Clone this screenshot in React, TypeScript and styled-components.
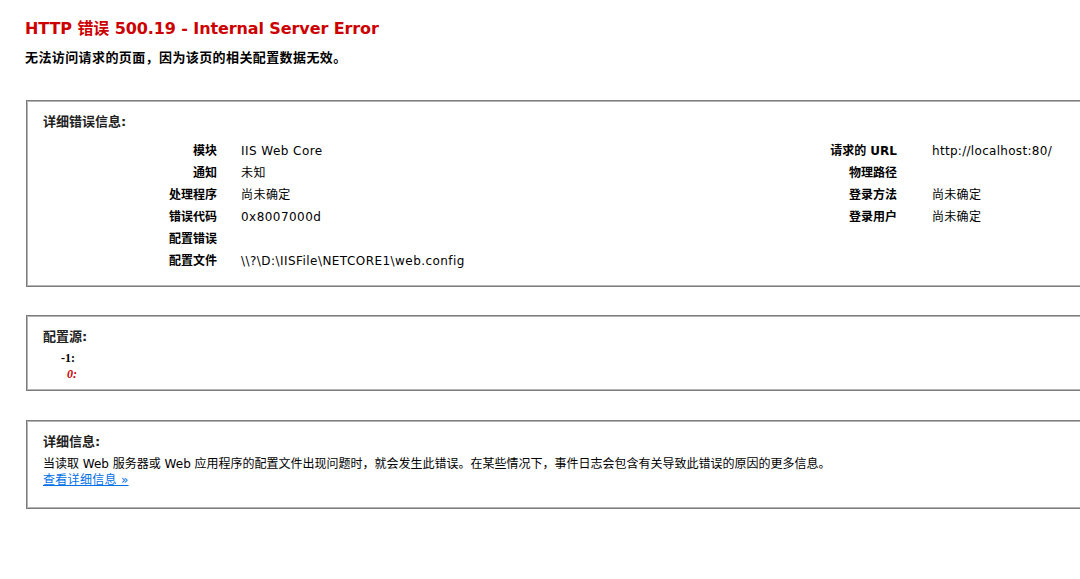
import React from 'react';
import styled, { createGlobalStyle } from 'styled-components';

const GlobalStyle = createGlobalStyle`
    html, body {
        margin: 0;
        padding: 0;
        background: #ffffff;
        overflow: hidden;
    }
    body {
        font-family: "DejaVu Sans", Verdana, "Noto Sans CJK SC", sans-serif;
        font-size: 12px;
        color: #000000;
    }
`;

const Page = styled.div`
    width: 1080px;
    height: 579px;
    overflow: hidden;
    padding: 18px 0 0 25px;
    box-sizing: border-box;
`;

const Title = styled.h2`
    margin: 0;
    font-size: 16px;
    line-height: 22px;
    font-weight: bold;
    color: #cc0000;
    letter-spacing: -0.1px;
`;

const SubTitle = styled.h3`
    margin: 9px 0 0 0;
    font-size: 13px;
    line-height: 18px;
    font-weight: bold;
    color: #000000;
    letter-spacing: 0.4px;
`;

const Box = styled.section<{ $top: number; $pad: number }>`
    margin: ${p => p.$top}px 0 0 1px;
    width: 1100px;
    box-sizing: border-box;
    border: 1px solid #7c7c7c;
    box-shadow: inset 0 0 0 1px #b4b4b4;
    padding: 12px 17px ${p => p.$pad}px 16px;
`;

const Legend = styled.div`
    font-weight: bold;
    font-size: 13px;
    color: #222222;
    line-height: 17px;
`;

const Details = styled.div`
    display: flex;
    margin-top: 10px;
`;

const Table = styled.div<{ $label: number; $gap: number; $width: number }>`
    display: grid;
    grid-template-columns: ${p => p.$label}px 1fr;
    column-gap: ${p => p.$gap}px;
    width: ${p => p.$width}px;
    align-content: start;
`;

const Label = styled.div`
    text-align: right;
    font-weight: bold;
    line-height: 16px;
    padding: 3px 0;
    white-space: nowrap;
`;

const Value = styled.div<{ $spacing: number }>`
    line-height: 16px;
    padding: 3px 0;
    white-space: nowrap;
    letter-spacing: ${p => p.$spacing}px;
`;

const SourceList = styled.div`
    margin-top: 5px;
    font-family: "Liberation Serif", "Times New Roman", serif;
    font-size: 12px;
    line-height: 16px;
`;

const SourceLine = styled.div<{ $indent: number; $hl?: boolean }>`
    padding-left: ${p => p.$indent}px;
    font-weight: bold;
    color: ${p => (p.$hl ? '#cc0000' : '#000000')};
    font-style: ${p => (p.$hl ? 'italic' : 'normal')};
`;

const Para = styled.p`
    margin: 6px 0 0 0;
    line-height: 16px;
`;

const MoreLink = styled.a`
    color: #0070e8;
    text-decoration: underline;
    line-height: 16px;
    display: inline-block;
    letter-spacing: 0.3px;
`;

const leftRows = [
    ['模块', 'IIS Web Core'],
    ['通知', '未知'],
    ['处理程序', '尚未确定'],
    ['错误代码', '0x8007000d'],
    ['配置错误', ''],
    ['配置文件', '\\\\?\\D:\\IISFile\\NETCORE1\\web.config'],
];

const rightRows = [
    ['请求的 URL', 'http://localhost:80/'],
    ['物理路径', ''],
    ['登录方法', '尚未确定'],
    ['登录用户', '尚未确定'],
];

const App = () => {
    return (
        <Page>
            <GlobalStyle />
            <Title>HTTP 错误 500.19 - Internal Server Error</Title>
            <SubTitle>无法访问请求的页面，因为该页的相关配置数据无效。</SubTitle>

            <Box $top={33} $pad={14}>
                <Legend>详细错误信息:</Legend>
                <Details>
                    <Table $label={174} $gap={24} $width={660}>
                        {leftRows.map((row, i) => (
                            <React.Fragment key={i}>
                                <Label>{row[0]}</Label>
                                <Value $spacing={0.45}>{row[1]}</Value>
                            </React.Fragment>
                        ))}
                    </Table>
                    <Table $label={194} $gap={35} $width={400}>
                        {rightRows.map((row, i) => (
                            <React.Fragment key={i}>
                                <Label>{row[0]}</Label>
                                <Value $spacing={0.3}>{row[1]}</Value>
                            </React.Fragment>
                        ))}
                    </Table>
                </Details>
            </Box>

            <Box $top={28} $pad={8}>
                <Legend>配置源:</Legend>
                <SourceList>
                    <SourceLine $indent={18}>-1:</SourceLine>
                    <SourceLine $indent={24} $hl>0:</SourceLine>
                </SourceList>
            </Box>

            <Box $top={29} $pad={20}>
                <Legend>详细信息:</Legend>
                <Para>当读取 Web 服务器或 Web 应用程序的配置文件出现问题时，就会发生此错误。在某些情况下，事件日志会包含有关导致此错误的原因的更多信息。</Para>
                <MoreLink href="#">查看详细信息 »</MoreLink>
            </Box>
        </Page>
    );
};

export default App;
